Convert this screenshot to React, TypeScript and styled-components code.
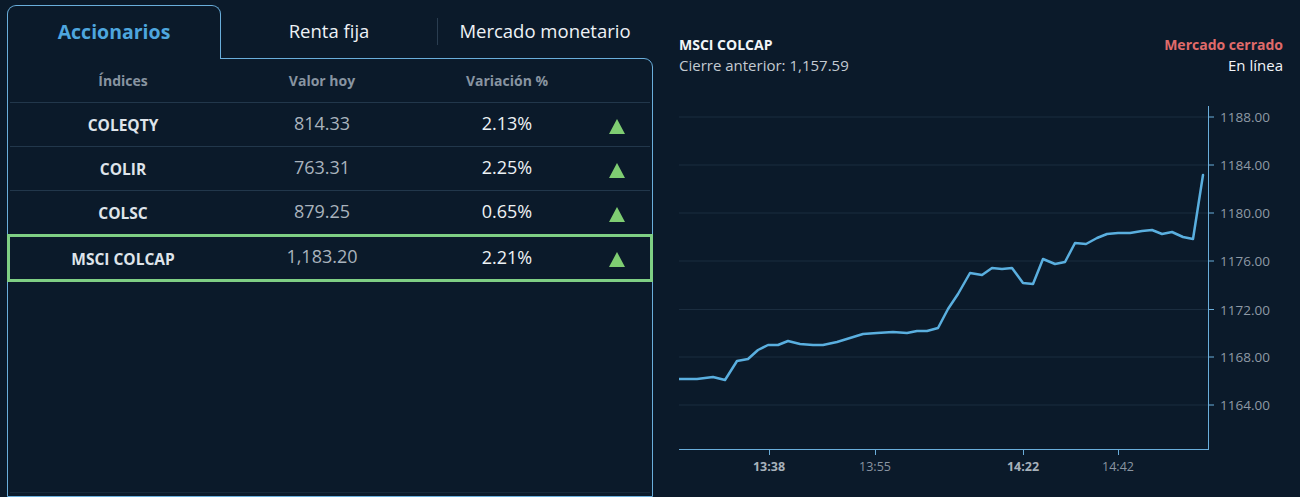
import React from "react";
import styled, { createGlobalStyle } from "styled-components";

const GlobalStyle = createGlobalStyle`
  html, body {
    margin: 0;
    padding: 0;
    background: #0b1a2a;
    font-family: "Open Sans", Lato, "Liberation Sans", sans-serif;
    overflow: hidden;
  }
`;

const BORDER = "#6aaedb";

const Page = styled.div`
  display: flex;
  gap: 26px;
  padding: 5px 17px 0 7px;
  width: 1300px;
  height: 497px;
  box-sizing: border-box;
`;

const LeftPanel = styled.div`
  width: 646px;
  display: flex;
  flex-direction: column;
`;

const TabBar = styled.div`
  display: flex;
  height: 53px;
`;

const ActiveTab = styled.div`
  position: relative;
  z-index: 1;
  width: 214px;
  box-sizing: border-box;
  border: 1px solid ${BORDER};
  border-bottom: none;
  border-radius: 9px 9px 0 0;
  background: #0b1a2a;
  margin-bottom: -1px;
  height: 54px;
  display: flex;
  align-items: center;
  justify-content: center;
  color: #4ea6de;
  font-weight: 700;
  font-size: 19.5px;
  padding-bottom: 2px;
`;

const Tab = styled.div<{ $divider?: boolean }>`
  flex: 1;
  display: flex;
  align-items: center;
  justify-content: center;
  color: #eef2f6;
  font-size: 18.5px;
  position: relative;
  padding-bottom: 2px;
  ${(p) =>
    p.$divider
      ? `&::before {
    content: "";
    position: absolute;
    left: 0;
    top: 13px;
    height: 27px;
    width: 1px;
    background: #2a3d50;
  }`
      : ""}
`;

const Body = styled.div`
  border: 1px solid ${BORDER};
  border-top-right-radius: 9px;
  height: 460px;
  box-sizing: border-box;
  padding: 0 2px;
  display: flex;
  flex-direction: column;
`;

const Table = styled.div`
  height: 433px;
  border-bottom: 1px solid #17293a;
  display: flex;
  flex-direction: column;
`;

const RowGrid = styled.div<{ $selected?: boolean; $header?: boolean }>`
  display: grid;
  grid-template-columns: 226px 172px 198px 1fr;
  align-items: center;
  box-sizing: border-box;
  height: ${(p) => (p.$selected ? "48px" : "44px")};
  border-bottom: ${(p) => (p.$selected ? "3px solid #7fcf84" : "1px solid #22374b")};
  ${(p) =>
    p.$selected
      ? `border-top: 3px solid #7fcf84; border-left: 3px solid #7fcf84; border-right: 3px solid #7fcf84; margin: -1px -3px 0;`
      : ""}
`;

const HeadCell = styled.div`
  text-align: center;
  color: #8894a1;
  font-weight: 700;
  font-size: 14px;
`;

const NameCell = styled.div`
  text-align: center;
  color: #dfe4ea;
  font-weight: 700;
  font-size: 15.5px;
  padding-top: 1px;
`;

const ValueCell = styled.div`
  text-align: center;
  color: #a9b3bd;
  font-size: 18px;
  padding-bottom: 4px;
`;

const VarCell = styled.div`
  text-align: center;
  color: #eef2f5;
  font-size: 18px;
  padding-bottom: 3px;
`;

const ArrowCell = styled.div`
  padding-left: 3px;
  display: flex;
  align-items: center;
  padding-top: 3px;
`;

const UpTriangle = styled.span`
  display: block;
  width: 0;
  height: 0;
  border-left: 8px solid transparent;
  border-right: 8px solid transparent;
  border-bottom: 15px solid #7fcd72;
`;

const RightPanel = styled.div`
  flex: 1;
  display: flex;
  flex-direction: column;
  padding-top: 30px;
`;

const ChartHeader = styled.div`
  display: flex;
  justify-content: space-between;
  line-height: 20px;
`;

const HeaderCol = styled.div<{ $right?: boolean }>`
  display: flex;
  flex-direction: column;
  align-items: ${(p) => (p.$right ? "flex-end" : "flex-start")};
`;

const Title = styled.div<{ $color: string }>`
  font-weight: 700;
  font-size: 14px;
  color: ${(p) => p.$color};
`;

const SubText = styled.div<{ $color: string }>`
  font-size: 15px;
  color: ${(p) => p.$color};
`;

const ChartSvg = styled.svg`
  display: block;
  margin-top: 26px;
`;

type Row = { name: string; value: string; change: string };
const rows: Row[] = [
  { name: "COLEQTY", value: "814.33", change: "2.13%" },
  { name: "COLIR", value: "763.31", change: "2.25%" },
  { name: "COLSC", value: "879.25", change: "0.65%" },
  { name: "MSCI COLCAP", value: "1,183.20", change: "2.21%" },
];

const points: [number, number][] = [
  [679, 378], [697, 378], [713, 376], [725, 379], [737, 360], [748, 358],
  [758, 349], [768, 344], [778, 344], [788, 340], [800, 343], [813, 344],
  [823, 344], [837, 341], [850, 337], [863, 333], [877, 332], [893, 331],
  [907, 332], [917, 330], [927, 330], [938, 327], [948, 308], [958, 293],
  [970, 272], [982, 274], [992, 267], [1002, 268], [1012, 267], [1023, 282],
  [1033, 283], [1043, 258], [1055, 263], [1065, 261], [1075, 242], [1086, 243],
  [1097, 237], [1107, 233], [1118, 232], [1130, 232], [1142, 230], [1152, 229],
  [1162, 233], [1172, 231], [1183, 236], [1193, 238], [1203, 174],
];

const yTicks = [
  { y: 116, label: "1188.00" },
  { y: 164, label: "1184.00" },
  { y: 212, label: "1180.00" },
  { y: 260, label: "1176.00" },
  { y: 308.5, label: "1172.00" },
  { y: 356, label: "1168.00" },
  { y: 404, label: "1164.00" },
];

const xTicks = [
  { x: 769, label: "13:38", bold: true },
  { x: 875, label: "13:55", bold: false },
  { x: 1023, label: "14:22", bold: true },
  { x: 1118, label: "14:42", bold: false },
];

const FONT = "'Open Sans', Lato, 'Liberation Sans', sans-serif";

function Chart() {
  const d = points.map((p, i) => `${i === 0 ? "M" : "L"}${p[0]} ${p[1]}`).join(" ");
  return (
    <ChartSvg width={604} height={380} viewBox="679 100 604 380">
      {yTicks.map((t) => (
        <g key={t.label}>
          <line x1={679} x2={1208} y1={t.y} y2={t.y} stroke="#1b2d3f" strokeWidth={1} />
          <line x1={1208} x2={1214} y1={t.y} y2={t.y} stroke="#6aaedb" strokeWidth={1} />
          <text x={1220} y={t.y + 5} fill="#8e99a5" fontSize={13.5} fontFamily={FONT}>
            {t.label}
          </text>
        </g>
      ))}
      <line x1={1208.5} x2={1208.5} y1={105} y2={449} stroke="#6aaedb" strokeWidth={1} />
      <line x1={679} x2={1209} y1={448.5} y2={448.5} stroke="#6aaedb" strokeWidth={1} />
      {xTicks.map((t) => (
        <g key={t.label}>
          <line x1={t.x + 0.5} x2={t.x + 0.5} y1={448} y2={454} stroke="#6aaedb" strokeWidth={1} />
          <text
            x={t.x}
            y={470}
            textAnchor="middle"
            fill={t.bold ? "#a7b1bb" : "#8a95a1"}
            fontWeight={t.bold ? 700 : 400}
            fontSize={12.5}
            fontFamily={FONT}
          >
            {t.label}
          </text>
        </g>
      ))}
      <path d={d} fill="none" stroke="#5aafdf" strokeWidth={2.5} strokeLinejoin="round" strokeLinecap="round" />
    </ChartSvg>
  );
}

export default function App() {
  return (
    <>
      <GlobalStyle />
      <Page>
        <LeftPanel>
          <TabBar>
            <ActiveTab>Accionarios</ActiveTab>
            <Tab>Renta fija</Tab>
            <Tab $divider>Mercado monetario</Tab>
          </TabBar>
          <Body>
            <Table>
              <RowGrid $header>
                <HeadCell>Índices</HeadCell>
                <HeadCell>Valor hoy</HeadCell>
                <HeadCell>Variación %</HeadCell>
                <div />
              </RowGrid>
              {rows.map((r, i) => (
                <RowGrid key={r.name} $selected={i === rows.length - 1}>
                  <NameCell>{r.name}</NameCell>
                  <ValueCell>{r.value}</ValueCell>
                  <VarCell>{r.change}</VarCell>
                  <ArrowCell>
                    <UpTriangle />
                  </ArrowCell>
                </RowGrid>
              ))}
            </Table>
          </Body>
        </LeftPanel>
        <RightPanel>
          <ChartHeader>
            <HeaderCol>
              <Title $color="#f2f5f8">MSCI COLCAP</Title>
              <SubText $color="#c3cad1">Cierre anterior: 1,157.59</SubText>
            </HeaderCol>
            <HeaderCol $right>
              <Title $color="#e06b6b">Mercado cerrado</Title>
              <SubText $color="#f2f5f8">En línea</SubText>
            </HeaderCol>
          </ChartHeader>
          <Chart />
        </RightPanel>
      </Page>
    </>
  );
}
